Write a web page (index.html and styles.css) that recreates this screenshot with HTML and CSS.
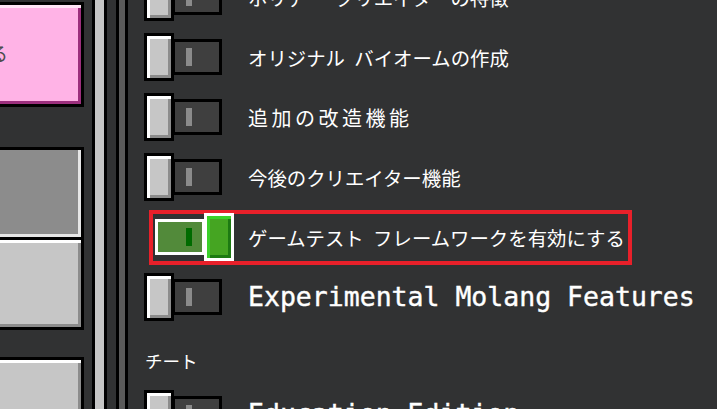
FILE: index.html
```html
<!DOCTYPE html>
<html lang="ja">
<head>
<meta charset="utf-8">
<title>実験的な機能</title>
<link rel="stylesheet" href="styles.css">
</head>
<body>
<div class="screen">
  <div class="side">
    <div class="btn btn-pink"><span class="btn-label">ワールドを作る</span></div>
    <div class="btn btn-pressed"></div>
    <div class="btn btn-light btn-joined"></div>
    <div class="btn btn-light btn-last"></div>
  </div>
  <div class="rails">
    <div class="rail rail-black"></div>
    <div class="rail rail-thumb"></div>
    <div class="rail rail-black"></div>
    <div class="rail rail-dark"></div>
    <div class="rail rail-black"></div>
    <div class="rail rail-track"></div>
    <div class="rail rail-black"></div>
  </div>
  <div class="list">
    <div class="row">
      <div class="toggle"><div class="knob"></div><div class="track"><span class="pip"></span></div></div>
      <span class="label jp">ホリデー クリエイターの特徴</span>
    </div>
    <div class="row">
      <div class="toggle"><div class="knob"></div><div class="track"><span class="pip"></span></div></div>
      <span class="label jp">オリジナル バイオームの作成</span>
    </div>
    <div class="row">
      <div class="toggle"><div class="knob"></div><div class="track"><span class="pip"></span></div></div>
      <span class="label jp jp-wide">追加の改造機能</span>
    </div>
    <div class="row">
      <div class="toggle"><div class="knob"></div><div class="track"><span class="pip"></span></div></div>
      <span class="label jp">今後のクリエイター機能</span>
    </div>
    <div class="row row-focused">
      <div class="toggle toggle-on"><div class="track"><span class="pip"></span></div><div class="knob"></div></div>
      <span class="label jp">ゲームテスト フレームワークを有効にする</span>
    </div>
    <div class="row">
      <div class="toggle"><div class="knob"></div><div class="track"><span class="pip"></span></div></div>
      <span class="label en">Experimental Molang Features</span>
    </div>
    <div class="section">チート</div>
    <div class="row">
      <div class="toggle"><div class="knob"></div><div class="track"><span class="pip"></span></div></div>
      <span class="label en">Education Edition</span>
    </div>
  </div>
</div>
</body>
</html>
```

FILE: styles.css
```css
html, body {
  margin: 0;
  padding: 0;
  background: #313233;
  overflow: hidden;
}

.screen {
  display: flex;
  width: 717px;
  height: 409px;
  overflow: hidden;
  background: #313233;
  font-family: "Noto Sans CJK JP", "Noto Sans", sans-serif;
  color: #ffffff;
}

/* left panel buttons */
.side {
  width: 84px;
  flex: none;
  display: flex;
  flex-direction: column;
}

.btn {
  box-sizing: border-box;
  width: 84px;
  flex: none;
  border: 3px solid #000000;
  border-left: none;
}

.btn-pink {
  margin-top: 2px;
  height: 105px;
  background: #ffb3e6;
  box-shadow: inset 0 3px 0 #ffe4f6, inset -3px 0 0 #9c2f7d, inset 0 -3px 0 #9c2f7d;
  display: flex;
  align-items: center;
  justify-content: flex-end;
  padding-right: 73px;
  padding-bottom: 4px;
  overflow: hidden;
}

.btn-label {
  font-size: 19px;
  line-height: 1;
  color: #4c4c4c;
  white-space: nowrap;
}

.btn-pressed {
  margin-top: 40px;
  height: 93px;
  background: #8c8c8c;
  box-shadow: inset -3px 0 0 #e6e6e6, inset 0 -3px 0 #e6e6e6;
}

.btn-light {
  background: #c6c6c6;
  box-shadow: inset 0 3px 0 #ffffff, inset -3px 0 0 #8c8c8c, inset 0 -3px 0 #8c8c8c;
}

.btn-joined {
  height: 90px;
  border-top: none;
}

.btn-last {
  margin-top: 27px;
  height: 100px;
}

/* scroll rails */
.rails {
  display: flex;
  margin-left: 8px;
  flex: none;
}

.rail { height: 409px; }
.rail-black { width: 3px; background: #000000; }
.rail-thumb { width: 9px; background: #c6c6c6; }
.rail-dark { width: 9px; background: #313233; }
.rail-track { width: 6px; background: #5a5a5a; }

/* settings list */
.list {
  margin-left: 16px;
  margin-top: -27px;
  display: flex;
  flex-direction: column;
  flex: 1;
}

.row {
  display: flex;
  align-items: center;
  height: 48px;
  margin-bottom: 12px;
  flex: none;
}

.toggle {
  display: flex;
  align-items: center;
  flex: none;
}

.knob {
  position: relative;
  z-index: 1;
  box-sizing: border-box;
  width: 30px;
  height: 48px;
  border: 3px solid #000000;
  background: #c6c6c6;
  box-shadow: inset 3px 3px 0 #ffffff, inset -3px -3px 0 #8c8c8c;
}

.track {
  box-sizing: border-box;
  width: 50px;
  height: 36px;
  margin-left: -2px;
  border: 3px solid #000000;
  background: #3f3f3f;
  display: flex;
  align-items: center;
  padding-left: 11px;
}

.pip {
  width: 6px;
  height: 18px;
  background: #8b8b8b;
}

.label {
  margin-left: 26px;
  white-space: nowrap;
  line-height: 1;
}

.jp {
  font-size: 19.4px;
  word-spacing: 5px;
  padding-top: 2px;
}

.jp-wide {
  font-size: 20px;
  letter-spacing: 3.5px;
}

.en {
  font-family: "DejaVu Sans Mono", "Liberation Mono", monospace;
  font-size: 26.5px;
  font-weight: normal;
  -webkit-text-stroke: 0.4px #ffffff;
}

/* focused (on) row */
.row-focused {
  position: relative;
}

.row-focused::after {
  content: "";
  position: absolute;
  left: 5px;
  top: -3px;
  width: 483px;
  height: 55px;
  box-sizing: border-box;
  border: 4px solid #e8202a;
  pointer-events: none;
}

.toggle-on {
  margin-left: 11px;
}

.toggle-on .track {
  margin-left: 0;
  width: 50px;
  border-color: #ffffff;
  background: #528a3a;
  padding-left: 28px;
}

.toggle-on .pip {
  background: #006b00;
}

.toggle-on .knob {
  margin-left: -1px;
  border-color: #ffffff;
  background: #45a522;
  box-shadow: inset 3px 3px 0 #3bd12a, inset -3px -3px 0 #1d7a12;
}

.row-focused .label {
  margin-left: 14px;
}

.section {
  height: 57px;
  display: flex;
  align-items: center;
  padding-left: 1px;
  padding-bottom: 2px;
  box-sizing: border-box;
  font-size: 17.5px;
  line-height: 1;
  flex: none;
}
```
